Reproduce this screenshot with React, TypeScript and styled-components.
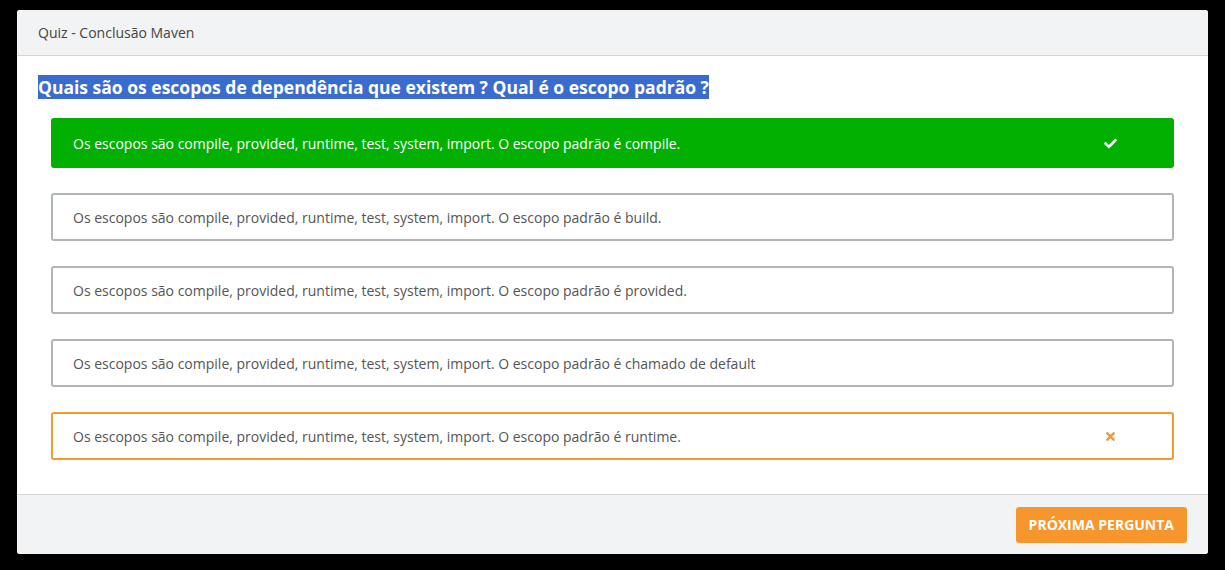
import styled, { createGlobalStyle } from "styled-components";
import { FaCheck, FaTimes } from "react-icons/fa";

const GlobalStyle = createGlobalStyle`
  html, body {
    margin: 0;
    padding: 0;
    background: #000;
    font-family: "Open Sans", "Liberation Sans", sans-serif;
  }
`;

const Page = styled.div`
  padding: 10px 17px 16px 17px;
`;

const Card = styled.div`
  background: #fff;
  border-radius: 3px;
  overflow: hidden;
  display: flex;
  flex-direction: column;
`;

const Header = styled.div`
  height: 46px;
  box-sizing: border-box;
  padding: 0 21px;
  display: flex;
  align-items: center;
  background: #f2f3f5;
  border-bottom: 1px solid #d3d6da;
  font-size: 14px;
  color: #444;
`;

const Body = styled.div`
  padding: 20px 21px 34px;
`;

const Question = styled.h2`
  margin: 0 0 19px;
  font-size: 17.5px;
  font-weight: 700;
  line-height: 23px;
  color: #fff;
  span {
    background: #3a6cce;
  }
`;

const Options = styled.div`
  display: flex;
  flex-direction: column;
  gap: 25px;
  margin: 0 13px;
`;

type Kind = "correct" | "wrong" | "neutral";

const Option = styled.div<{ $kind: Kind }>`
  box-sizing: border-box;
  height: ${(p) => (p.$kind === "correct" ? "50px" : "48px")};
  display: flex;
  align-items: center;
  justify-content: space-between;
  padding: 0 55px 0 20px;
  border-radius: 3px;
  font-size: 14px;
  border: 2px solid
    ${(p) =>
      p.$kind === "correct" ? "#01b001" : p.$kind === "wrong" ? "#f7982f" : "#b0b5ba"};
  background: ${(p) => (p.$kind === "correct" ? "#01b001" : "#fff")};
  color: ${(p) => (p.$kind === "correct" ? "#fff" : "#555")};
  svg {
    width: 13px;
    height: 13px;
    color: ${(p) => (p.$kind === "correct" ? "#fff" : "#f7982f")};
  }
`;

const Footer = styled.div`
  height: 60px;
  box-sizing: border-box;
  background: #f2f3f5;
  border-top: 1px solid #d3d6da;
  display: flex;
  align-items: center;
  justify-content: flex-end;
  padding: 0 21px;
`;

const NextButton = styled.button`
  height: 36px;
  padding: 0 13px;
  border: none;
  border-radius: 3px;
  background: #f8962e;
  color: #fff;
  font-family: inherit;
  font-weight: 700;
  font-size: 14px;
  text-transform: uppercase;
  cursor: pointer;
`;

const answers: { text: string; kind: Kind }[] = [
  { text: "Os escopos são compile, provided, runtime, test, system, import. O escopo padrão é compile.", kind: "correct" },
  { text: "Os escopos são compile, provided, runtime, test, system, import. O escopo padrão é build.", kind: "neutral" },
  { text: "Os escopos são compile, provided, runtime, test, system, import. O escopo padrão é provided.", kind: "neutral" },
  { text: "Os escopos são compile, provided, runtime, test, system, import. O escopo padrão é chamado de default", kind: "neutral" },
  { text: "Os escopos são compile, provided, runtime, test, system, import. O escopo padrão é runtime.", kind: "wrong" },
];

export default function App() {
  return (
    <>
      <GlobalStyle />
      <Page>
        <Card>
          <Header>Quiz - Conclusão Maven</Header>
          <Body>
            <Question>
              <span>Quais são os escopos de dependência que existem ? Qual é o escopo padrão ?</span>
            </Question>
            <Options>
              {answers.map((a, i) => (
                <Option key={i} $kind={a.kind}>
                  <span>{a.text}</span>
                  {a.kind === "correct" && <FaCheck />}
                  {a.kind === "wrong" && <FaTimes />}
                </Option>
              ))}
            </Options>
          </Body>
          <Footer>
            <NextButton>Próxima pergunta</NextButton>
          </Footer>
        </Card>
      </Page>
    </>
  );
}
